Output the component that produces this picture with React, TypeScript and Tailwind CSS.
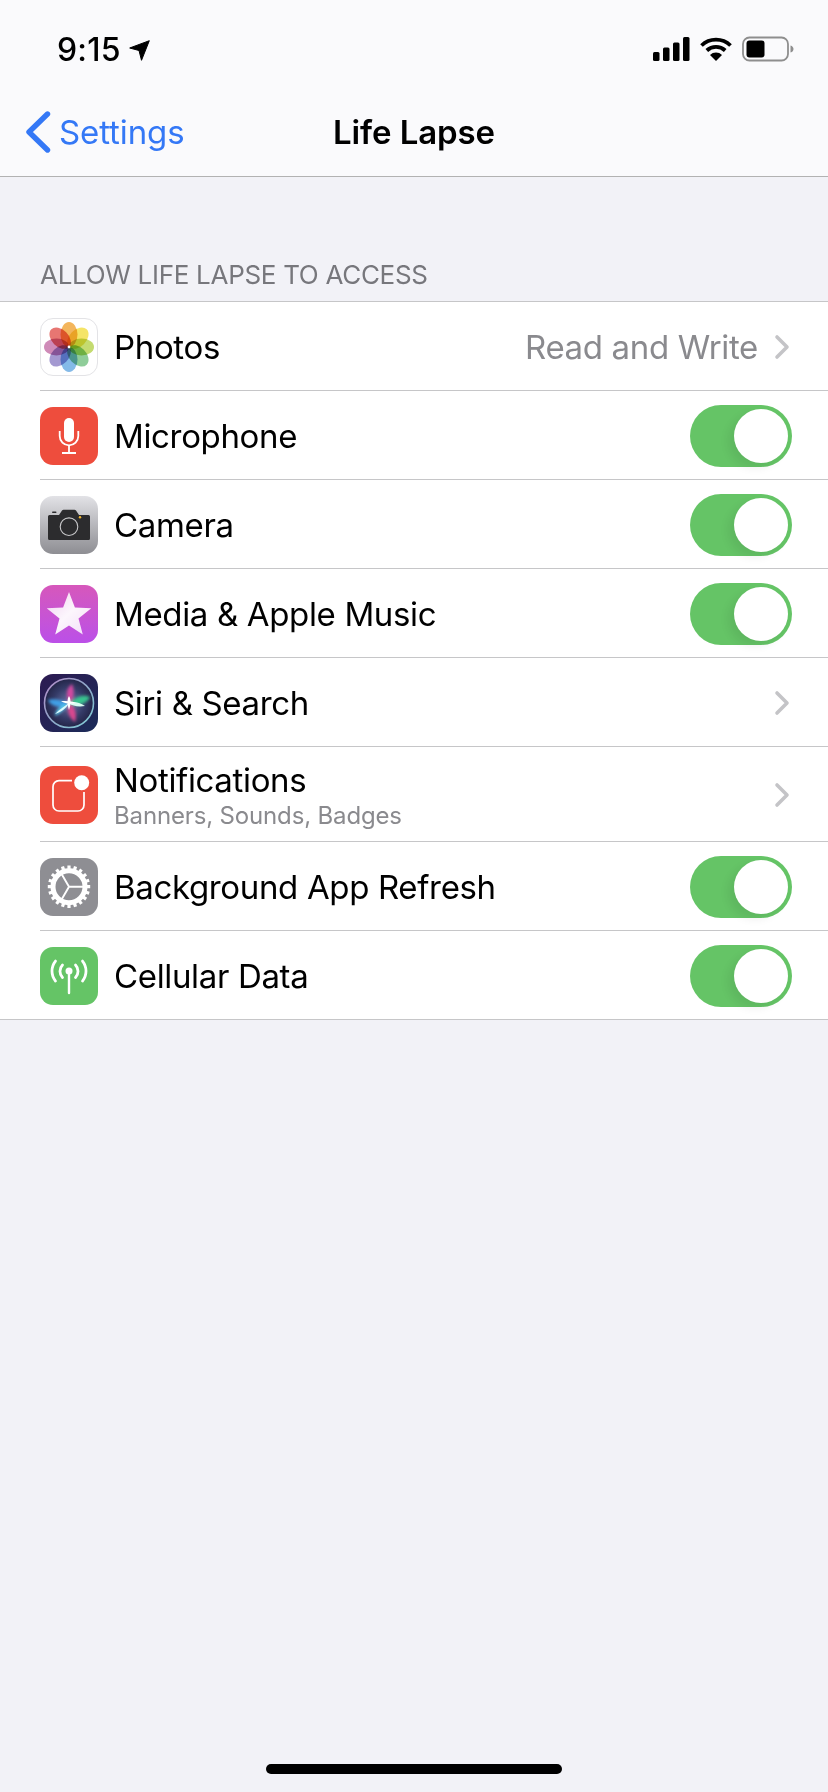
import React from "react";

const font = { fontFamily: "Inter, 'Liberation Sans', sans-serif" };

function Tile({ children, className = "" }: { children: React.ReactNode; className?: string }) {
  return (
    <div className={`w-[58px] h-[58px] rounded-[13px] shrink-0 flex items-center justify-center overflow-hidden ${className}`}>
      {children}
    </div>
  );
}

function PhotosIcon() {
  const petals = ["#f0a02e", "#f2dc3c", "#b4d148", "#6fbf7c", "#62a6e2", "#8a7cc4", "#c26aa4", "#e0504a"];
  return (
    <Tile className="bg-white border border-[#e3e3e6]">
      <svg width="56" height="56" viewBox="0 0 56 56">
        {petals.map((c, i) => (
          <ellipse key={i} cx="28" cy="15.500" rx="8.500" ry="12.500" fill={c} fillOpacity="0.78" style={{ mixBlendMode: "multiply" }} transform={`rotate(${i * 45} 28 28)`} />
        ))}
        <circle cx="28" cy="28" r="1.400" fill="#fff" />
      </svg>
    </Tile>
  );
}

function MicIcon() {
  return (
    <Tile className="bg-[#ee4d3d]">
      <svg width="58" height="58" viewBox="0 0 58 58" fill="none" stroke="#fff" strokeWidth="1.800" strokeLinecap="butt">
        <rect x="24" y="11" width="10" height="24" rx="5" fill="#fff" stroke="none" />
        <path d="M19.700 24v5a9.300 9.300 0 0 0 18.600 0v-5" />
        <path d="M29 38v8M22 46h14" />
      </svg>
    </Tile>
  );
}

function CameraIcon() {
  return (
    <Tile className="bg-gradient-to-b from-[#e2e2e6] to-[#8e8e93]">
      <svg width="58" height="58" viewBox="0 0 58 58">
        <path d="M8 20.500a1.500 1.500 0 0 1 1.500-1.500h9.500l3-4.500a2 2 0 0 1 1.500-.8h11a2 2 0 0 1 1.500.8l3 4.500h9.500a1.500 1.500 0 0 1 1.500 1.500v22a1.500 1.500 0 0 1-1.500 1.500h-39a1.500 1.500 0 0 1-1.500-1.500z" fill="#2c2c2e" />
        <rect x="12" y="15.500" width="4.500" height="1.600" rx=".8" fill="#2c2c2e" />
        <circle cx="29" cy="30.700" r="8.800" fill="none" stroke="#c8c8ca" strokeWidth="1.100" />
        <circle cx="40" cy="21.300" r="1.200" fill="#f5b82e" />
      </svg>
    </Tile>
  );
}

function StarIcon() {
  return (
    <Tile className="bg-gradient-to-b from-[#d657bb] to-[#bb4fe8]">
      <svg width="58" height="58" viewBox="0 0 58 58">
        <defs>
          <linearGradient id="st" x1="0" y1="0" x2="1" y2="1">
            <stop offset="0" stopColor="#fff" stopOpacity=".72" />
            <stop offset=".5" stopColor="#fff" stopOpacity=".95" />
            <stop offset="1" stopColor="#fff" stopOpacity=".8" />
          </linearGradient>
        </defs>
        <path d="M29 7L34.900 22.400 51.300 23.200 38.500 33.600 42.800 49.500 29 40.500 15.200 49.500 19.500 33.600 6.700 23.200 23.100 22.400z" fill="url(#st)" />
      </svg>
    </Tile>
  );
}

function SiriIcon() {
  return (
    <Tile className="bg-gradient-to-br from-[#2c1a52] to-[#1a2b58]">
      <svg width="58" height="58" viewBox="0 0 58 58">
        <defs>
          <radialGradient id="sb" cx=".5" cy=".5" r=".5">
            <stop offset="0" stopColor="#6c74a8" />
            <stop offset=".65" stopColor="#343a66" />
            <stop offset="1" stopColor="#242548" />
          </radialGradient>
          <linearGradient id="sr" x1="0" y1="0" x2="1" y2="1">
            <stop offset="0" stopColor="#b58bc8" />
            <stop offset=".5" stopColor="#8ea6c8" />
            <stop offset="1" stopColor="#7fd0d6" />
          </linearGradient>
          <filter id="sf" x="-20%" y="-20%" width="140%" height="140%">
            <feGaussianBlur stdDeviation="1.400" />
          </filter>
          <filter id="sg" x="-20%" y="-20%" width="140%" height="140%">
            <feGaussianBlur stdDeviation=".5" />
          </filter>
        </defs>
        <circle cx="29" cy="29" r="24.500" fill="url(#sb)" stroke="url(#sr)" strokeWidth="1.600" />
        <g filter="url(#sf)">
          <path d="M30 30C25 22 26 14 32 10c3 7 2 14-2 20z" fill="#d04aa0" />
          <path d="M29 30c7-8 14-10 21-7-3 7-13 10-21 7z" fill="#37c28e" />
          <path d="M29 29c7 4 8 12 6 19-6-4-9-12-6-19z" fill="#d8468e" />
          <path d="M30 30C22 26 14 24 8 26c3 7 14 9 22 4z" fill="#3f9fe6" />
          <path d="M29 29c-3 5-8 10-14 13 0-6 7-12 14-13z" fill="#58c8ea" />
        </g>
        <g filter="url(#sg)">
          <path d="M29 29c-4 3-9 6-14 11 6-2 11-5 14-11z" fill="#d8fbff" />
          <path d="M28 29c5-2 11-1 17 3-7 1-12 0-17-3z" fill="#d8fbf0" />
          <path d="M29 22c2 3 2 8 0 14-2-6-2-11 0-14z" fill="#fff" />
          <path d="M21 27c5 0 11 0 15 2-5 1-11 1-15-2z" fill="#fff" />
        </g>
      </svg>
    </Tile>
  );
}

function NotifIcon() {
  return (
    <Tile className="bg-[#ee4d3d]">
      <svg width="58" height="58" viewBox="0 0 58 58" fill="none">
        <path d="M32 14.700H19a6 6 0 0 0-6 6V39a6 6 0 0 0 6 6h19a6 6 0 0 0 6-6V26" stroke="#fff" strokeWidth="1.700" />
        <circle cx="41.700" cy="16.700" r="7.500" fill="#fff" />
      </svg>
    </Tile>
  );
}

function GearIcon() {
  const teeth = Array.from({ length: 20 }, (_, i) => i * 18);
  return (
    <Tile className="bg-[#8e8e93]">
      <svg width="58" height="58" viewBox="0 0 58 58" fill="none" stroke="#fff">
        {teeth.map((a) => (
          <path key={a} d="M29 7.500v6" strokeWidth="3.200" transform={`rotate(${a} 29 28.700)`} />
        ))}
        <circle cx="29" cy="28.700" r="16" strokeWidth="5" />
        <path d="M29 28.700H45M29 28.700L21 15M29 28.700L21 42.500" strokeWidth="1.900" />
      </svg>
    </Tile>
  );
}

function CellIcon() {
  return (
    <Tile className="bg-[#65c466]">
      <svg width="58" height="58" viewBox="0 0 58 58" fill="none" stroke="#fff" strokeLinecap="round">
        <circle cx="29" cy="24" r="3.500" fill="#fff" stroke="none" />
        <path d="M29 25v21" strokeWidth="2.400" />
        <path d="M22.500 18a9 9 0 0 0 0 12.500M35.500 18a9 9 0 0 1 0 12.500" strokeWidth="2.800" />
        <path d="M15.500 14a16 16 0 0 0 0 20M42.500 14a16 16 0 0 1 0 20" strokeWidth="2.800" />
      </svg>
    </Tile>
  );
}

function Chevron() {
  return (
    <svg width="16" height="26" viewBox="0 0 16 26" fill="none" stroke="#c4c4c7" strokeWidth="3.600" strokeLinecap="round" strokeLinejoin="round" className="shrink-0 mr-[2px]">
      <path d="M3 3l10 10L3 23" />
    </svg>
  );
}

function Toggle() {
  return (
    <div className="w-[102px] h-[62px] rounded-full bg-[#65c466] flex items-center justify-end pr-[4px] shrink-0">
      <div className="w-[54px] h-[54px] rounded-full bg-white shadow-[-6px_5px_10px_rgba(0,0,0,0.07)]" />
    </div>
  );
}

function Row({
  icon,
  title,
  sub,
  right,
  last,
  tall,
}: {
  icon: React.ReactNode;
  title: string;
  sub?: string;
  right: React.ReactNode;
  last?: boolean;
  tall?: boolean;
}) {
  return (
    <div className={`${last ? "pl-0" : "pl-[40px]"} bg-white`}>
      <div className={`${tall ? "h-[95px]" : "h-[89px]"} ${last ? "pl-[40px]" : ""} border-b border-[#c6c6c8] flex items-center pr-[36px] pt-[2px]`}>
        {icon}
        <div className={`ml-[16px] flex-1 min-w-0 ${sub ? "pt-[2px]" : ""}`}>
          <div className="text-[33px] leading-[40px] text-black tracking-[-0.35px]">{title}</div>
          {sub && <div className="text-[24px] leading-[32px] text-[#8a8a8e] tracking-[-0.15px]">{sub}</div>}
        </div>
        {right}
      </div>
    </div>
  );
}

export default function App() {
  return (
    <div style={font} className="w-[828px] h-[1792px] bg-[#f2f2f7] flex flex-col overflow-hidden">
      <header className="h-[177px] bg-[#fafafc] border-b border-[#b2b2b2] shrink-0 flex flex-col">
        <div className="h-[88px] flex items-end justify-between pl-[57px] pr-[34px] pb-[19px]">
          <div className="flex items-center gap-[8px]">
            <span className="text-[32px] leading-[38px] font-medium text-black tracking-[0.2px]">9:15</span>
            <svg width="21" height="21" viewBox="0 0 21 21">
              <path d="M.7 8L20.300.7 12.500 20.300 10 10.500z" fill="#000" stroke="#000" strokeWidth="1" strokeLinejoin="round" />
            </svg>
          </div>
          <div className="flex items-center gap-[10px] pb-[7px]">
            <svg width="37" height="24" viewBox="0 0 37 24" fill="#000">
              <rect x="0" y="15" width="6.500" height="9" rx="1.500" />
              <rect x="10" y="10.500" width="6.500" height="13.500" rx="1.500" />
              <rect x="20" y="5.500" width="6.500" height="18.500" rx="1.500" />
              <rect x="30" y="0" width="6.500" height="24" rx="1.500" />
            </svg>
            <svg width="32" height="24" viewBox="0 0 32 24" fill="none" stroke="#000" strokeWidth="3.800">
              <path d="M1.500 8.500a21 21 0 0 1 29 0" />
              <path d="M6.800 13.500a13.500 13.500 0 0 1 18.400 0" />
              <path d="M16 24l-6-6a8.500 8.500 0 0 1 12 0z" fill="#000" stroke="none" />
            </svg>
            <svg width="52" height="26" viewBox="0 0 52 26">
              <rect x="1" y="1.500" width="45" height="23" rx="6.500" fill="none" stroke="#8e8e8e" strokeWidth="1.800" />
              <rect x="4.500" y="4.500" width="18" height="17" rx="3" fill="#000" />
              <path d="M48.500 9.500c2 .5 3 2 3 3.500s-1 3-3 3.500z" fill="#8e8e8e" />
            </svg>
          </div>
        </div>
        <div className="flex-1 relative flex items-center justify-center pb-[1px]">
          <div className="absolute left-[25px] top-[22px] flex items-center gap-[8px]">
            <svg width="26" height="44" viewBox="0 0 26 44" fill="none" stroke="#3478f6" strokeWidth="5.400" strokeLinecap="round" strokeLinejoin="round">
              <path d="M22.500 4L4 22l18.500 18" />
            </svg>
            <span className="text-[33px] leading-[40px] text-[#3478f6] tracking-[-0.1px]">Settings</span>
          </div>
          <span className="text-[33px] leading-[40px] font-semibold text-black tracking-[-0.1px] pt-[1px]">Life Lapse</span>
        </div>
      </header>

      <div className="h-[125px] shrink-0 flex items-end pl-[40px] pb-[11px] border-b border-[#c6c6c8]">
        <span className="text-[26px] leading-[30px] text-[#77777c] tracking-[-0.3px]">ALLOW LIFE LAPSE TO ACCESS</span>
      </div>

      <Row
        icon={<PhotosIcon />}
        title="Photos"
        right={
          <div className="flex items-center gap-[16px]">
            <span className="text-[33px] leading-[40px] text-[#8a8a8e] tracking-[-0.35px]">Read and Write</span>
            <Chevron />
          </div>
        }
      />
      <Row icon={<MicIcon />} title="Microphone" right={<Toggle />} />
      <Row icon={<CameraIcon />} title="Camera" right={<Toggle />} />
      <Row icon={<StarIcon />} title="Media & Apple Music" right={<Toggle />} />
      <Row icon={<SiriIcon />} title="Siri & Search" right={<Chevron />} />
      <Row icon={<NotifIcon />} title="Notifications" sub="Banners, Sounds, Badges" right={<Chevron />} tall />
      <Row icon={<GearIcon />} title="Background App Refresh" right={<Toggle />} />
      <Row icon={<CellIcon />} title="Cellular Data" right={<Toggle />} last />

      <div className="mt-auto flex justify-center pb-[18px]">
        <div className="w-[296px] h-[10px] rounded-full bg-black" />
      </div>
    </div>
  );
}
